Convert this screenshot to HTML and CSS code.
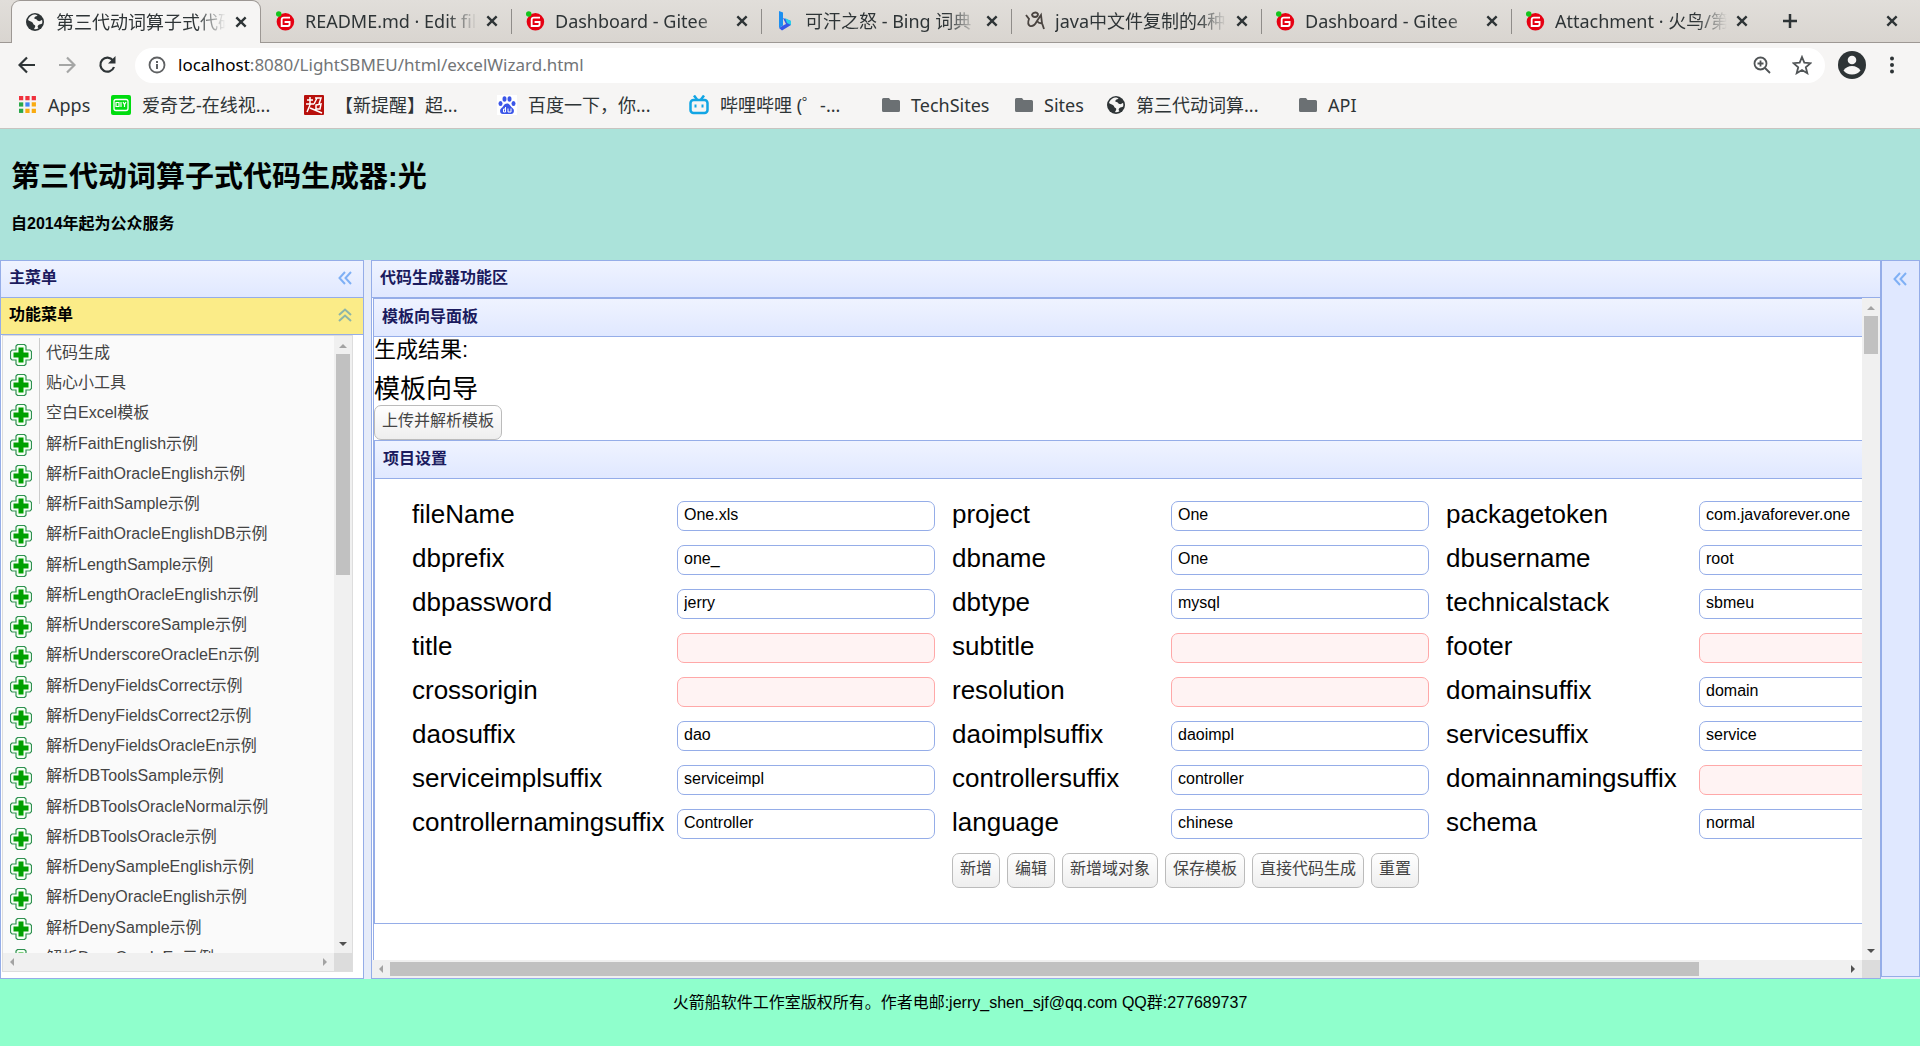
FILE: index.html
```html
<!DOCTYPE html>
<html lang="zh-CN">
<head>
<meta charset="utf-8">
<title>第三代动词算子式代码生成器:光</title>
<link rel="stylesheet" href="styles.css">
</head>
<body>
<svg class="sprite" aria-hidden="true">
  <symbol id="globe" viewBox="0 0 18 18"><circle cx="9" cy="9" r="9" fill="#2e3436"/><path d="M9.500 1.500C6 1.500 3 3.500 2 7c1.500 1.500 3 1 4.500 2.500 1 1 .5 2 2 2.500 1.200.4 1 2-.5 4 1 .5 3 .3 4.500-.7-.8-1.300-1.500-2 0-3.300 1-.9 2.500-.6 3.600-1.500.4-1.500.3-2.500-.1-3.500-1.500.5-2 1.500-3.500 1-1.800-.6-1.500-2-3-2-1.300 0-1.500-1-.7-2 .8-.8 2.200-.5 2.700-1.500z" fill="#f6f5f4"/></symbol>
  <symbol id="gitee" viewBox="0 0 22 24"><circle cx="11.500" cy="13" r="10.500" fill="#e60012"/><circle cx="3.500" cy="3.500" r="3.300" fill="#14c41c"/><path d="M17 8H9.500Q7 8 7 10.500V18h7.500q2 0 2-2v-2.800h-6" fill="none" stroke="#fff" stroke-width="2.200"/></symbol>
  <symbol id="cross" viewBox="0 0 12 12"><path d="M2 2l8 8M10 2l-8 8" stroke="#2e3436" stroke-width="2"/></symbol>
  <symbol id="folder" viewBox="0 0 18 16"><path d="M1.500 1H7l1.500 2h8q1.500 0 1.500 1.500v9q0 1.500-1.500 1.500h-15Q0 15 0 13.500v-11Q0 1 1.500 1z" fill="#6b7073"/></symbol>
  <symbol id="plus-cross" viewBox="0 0 22 22"><path d="M7.500.5h7l1.500 1.500v4h4l1.500 1.500v7L20 16h-4v4l-1.500 1.500h-7L6 20v-4H2L.5 14.500v-7L2 6h4V2z" fill="#f4fff4" stroke="#2f9150" stroke-width="1.200"/><path d="M8.500 3.500h5v5h5v5h-5v5h-5v-5h-5v-5h5z" fill="#00a000"/></symbol>
  <symbol id="fold-left" viewBox="0 0 14 14"><path d="M7 1L1.500 7 7 13M13 1L7.500 7 13 13" fill="none" stroke="#7fb0f5" stroke-width="2"/></symbol>
  <symbol id="fold-up" viewBox="0 0 14 14"><path d="M1 7l6-5.500L13 7M1 13l6-5.500L13 13" fill="none" stroke="#8db5a8" stroke-width="2"/></symbol>
</svg>

<header class="browser">
  <nav class="tabs" aria-label="标签页">
    <div class="tab tab-active"><svg class="favicon favicon-globe"><use href="#globe"/></svg><span class="tab-title">第三代动词算子式代码</span><button class="close" aria-label="关闭"><svg><use href="#cross"/></svg></button></div>
    <div class="tab"><svg class="favicon"><use href="#gitee"/></svg><span class="tab-title">README.md · Edit file</span><button class="close" aria-label="关闭"><svg><use href="#cross"/></svg></button></div>
    <div class="tab"><svg class="favicon"><use href="#gitee"/></svg><span class="tab-title">Dashboard - Gitee</span><button class="close" aria-label="关闭"><svg><use href="#cross"/></svg></button></div>
    <div class="tab"><svg class="favicon" viewBox="0 0 20 20"><path d="M4 0l4 1.500v13L4 17z" fill="#1d8ff0"/><path d="M8 7l8 3v4L7 19.500 4 17l5-3 2-1z" fill="#3457e8"/><path d="M10 7l6 3v4l-4-2z" fill="#2bd0e8"/></svg><span class="tab-title">可汗之怒 - Bing 词典</span><button class="close" aria-label="关闭"><svg><use href="#cross"/></svg></button></div>
    <div class="tab"><svg class="favicon" viewBox="0 0 20 20"><path d="M1 4l3 4q-2 5 1 7 4 1 7-5l4-6 1 8 2 6M7 3q4-3 6 0 0 3-3 3T7 3M12 10q2 3 6 2" fill="none" stroke="#4a4440" stroke-width="1.800"/></svg><span class="tab-title">java中文件复制的4种</span><button class="close" aria-label="关闭"><svg><use href="#cross"/></svg></button></div>
    <div class="tab"><svg class="favicon"><use href="#gitee"/></svg><span class="tab-title">Dashboard - Gitee</span><button class="close" aria-label="关闭"><svg><use href="#cross"/></svg></button></div>
    <div class="tab"><svg class="favicon"><use href="#gitee"/></svg><span class="tab-title">Attachment · 火鸟/第</span><button class="close" aria-label="关闭"><svg><use href="#cross"/></svg></button></div>
    <button class="new-tab" aria-label="新标签页"><svg viewBox="0 0 16 16"><path d="M8 1v14M1 8h14" stroke="#2e3436" stroke-width="2.500"/></svg></button>
    <button class="close window-close" aria-label="关闭窗口"><svg><use href="#cross"/></svg></button>
  </nav>
  <div class="toolbar">
    <button class="tool" aria-label="后退"><svg viewBox="0 0 18 18"><path d="M17 9H2M9 1.500L1.500 9 9 16.500" fill="none" stroke="#2e3436" stroke-width="2.200"/></svg></button>
    <button class="tool" aria-label="前进"><svg viewBox="0 0 18 18"><path d="M1 9h15M9 1.500L16.500 9 9 16.500" fill="none" stroke="#a5a6a5" stroke-width="2.200"/></svg></button>
    <button class="tool" aria-label="刷新"><svg viewBox="0 0 18 18"><path d="M15 4.500A7 7 0 1 0 16 11" fill="none" stroke="#2e3436" stroke-width="2.200"/><path d="M17.500 0v7.500H10z" fill="#2e3436"/></svg></button>
    <div class="omnibox">
      <svg class="info" viewBox="0 0 18 18"><circle cx="9" cy="9" r="7.500" fill="none" stroke="#5f6163" stroke-width="1.800"/><path d="M9 8v5M9 5v2" stroke="#5f6163" stroke-width="2"/></svg>
      <a class="url" href="#"><span class="host">localhost</span>:8080/LightSBMEU/html/excelWizard.html</a>
      <svg class="zoom-icon" viewBox="0 0 18 18"><circle cx="7.500" cy="7.500" r="6" fill="none" stroke="#505456" stroke-width="1.800"/><path d="M12 12l5 5M4.500 7.500h6M7.500 4.500v6" stroke="#505456" stroke-width="1.800"/></svg>
      <svg class="star" viewBox="0 0 20 20"><path d="M10 2l2.300 5.700 6.200.5-4.700 4 1.500 6L10 15l-5.300 3.200 1.500-6-4.700-4 6.200-.5z" fill="none" stroke="#505456" stroke-width="1.800"/></svg>
    </div>
    <svg class="avatar" viewBox="0 0 28 28"><circle cx="14" cy="14" r="14" fill="#2e3436"/><circle cx="14" cy="9" r="4.300" fill="#f6f5f4"/><path d="M5.500 19.500q3-4.500 8.500-4.500t8.500 4.500q-3 4-8.500 4t-8.500-4z" fill="#f6f5f4"/></svg>
    <svg class="dots" viewBox="0 0 4 18"><g fill="#2e3436"><circle cx="2" cy="2.500" r="2"/><circle cx="2" cy="9" r="2"/><circle cx="2" cy="15.500" r="2"/></g></svg>
  </div>
  <nav class="bookmarks" aria-label="书签">
    <a class="bm bm-apps" href="#"><svg class="apps" viewBox="0 0 17 17"><path d="M0 0h4v4H0zM6 0h4v4H6zM12 0h4v4h-4z" fill="#f0303c"/><path d="M0 6h4v4H0z" fill="#2aa84a"/><path d="M6 6h4v4H6z" fill="#4285f4"/><path d="M12 6h4v4h-4zM6 12h4v4H6zM12 12h4v4h-4z" fill="#f9ab10"/><path d="M0 12h4v4H0z" fill="#2aa84a"/></svg>Apps</a>
    <a class="bm bm-iqiyi" href="#"><svg class="bm-icon" viewBox="0 0 20 20"><rect width="20" height="20" rx="2" fill="#00dc10"/><rect x="3" y="4.500" width="14" height="11" rx="2" fill="none" stroke="#fff" stroke-width="1.300"/><path d="M5 7.500h3v4H5zM10 7v5M12 7l1.500 2.500L15 7M13.500 9.500V12" fill="none" stroke="#fff" stroke-width="1.200"/></svg>爱奇艺-在线视...</a>
    <a class="bm bm-chao" href="#"><svg class="bm-icon" viewBox="0 0 20 20"><rect width="20" height="20" rx="1" fill="#b8100c"/><path d="M3 5h6M6 2v8M2 9h8M6 10l-3 7M6 13l12 5M11 3h6l-2 6M13 3l-3 6M12 10l5-1-1 5h-4z" fill="none" stroke="#fff" stroke-width="1.500"/></svg>【新提醒】超...</a>
    <a class="bm bm-baidu" href="#"><svg class="bm-icon" viewBox="0 0 20 20"><rect width="20" height="20" fill="#fff"/><g fill="#3b56e8"><ellipse cx="3.500" cy="8.500" rx="2" ry="2.500"/><ellipse cx="7.500" cy="4" rx="2" ry="2.800"/><ellipse cx="12.500" cy="4" rx="2" ry="2.800"/><ellipse cx="16.500" cy="8.500" rx="2" ry="2.500"/><path d="M10 8.500c3 0 3.500 3 5.500 4.500 2.500 2 1.500 6-1.500 6H6c-3 0-4-4-1.500-6C6.500 11.500 7 8.500 10 8.500z"/></g><path d="M8.500 12v5H6.500v-3h2M11 13.500V17h3v-3.500" fill="none" stroke="#fff"/></svg>百度一下，你...</a>
    <a class="bm bm-bili" href="#"><svg class="bm-icon" viewBox="0 0 20 20"><rect x="1.500" y="5" width="17" height="13" rx="3" fill="none" stroke="#12a5e4" stroke-width="2.500"/><path d="M5 .5L8 4.500M15 .5l-3 4" stroke="#12a5e4" stroke-width="2.500"/><path d="M6.500 9.500v3M13.500 9.500v3" stroke="#12a5e4" stroke-width="2"/></svg>哔哩哔哩 (゜-...</a>
    <a class="bm bm-folder" href="#"><svg class="folder"><use href="#folder"/></svg>TechSites</a>
    <a class="bm bm-folder bm-sites" href="#"><svg class="folder"><use href="#folder"/></svg>Sites</a>
    <a class="bm bm-gen" href="#"><svg class="folder"><use href="#globe"/></svg>第三代动词算...</a>
    <a class="bm bm-folder" href="#"><svg class="folder"><use href="#folder"/></svg>API</a>
  </nav>
</header>

<div class="banner">
  <h1>第三代动词算子式代码生成器:光</h1>
  <h2>自2014年起为公众服务</h2>
</div>

<div class="workspace">
  <aside class="west">
    <h3 class="panel-title">主菜单<svg class="fold"><use href="#fold-left"/></svg></h3>
    <h3 class="panel-title panel-selected">功能菜单<svg class="fold"><use href="#fold-up"/></svg></h3>
    <div class="menu-box">
      <ul class="menu">
        <li><svg><use href="#plus-cross"/></svg><a href="#">代码生成</a></li>
        <li><svg><use href="#plus-cross"/></svg><a href="#">贴心小工具</a></li>
        <li><svg><use href="#plus-cross"/></svg><a href="#">空白Excel模板</a></li>
        <li><svg><use href="#plus-cross"/></svg><a href="#">解析FaithEnglish示例</a></li>
        <li><svg><use href="#plus-cross"/></svg><a href="#">解析FaithOracleEnglish示例</a></li>
        <li><svg><use href="#plus-cross"/></svg><a href="#">解析FaithSample示例</a></li>
        <li><svg><use href="#plus-cross"/></svg><a href="#">解析FaithOracleEnglishDB示例</a></li>
        <li><svg><use href="#plus-cross"/></svg><a href="#">解析LengthSample示例</a></li>
        <li><svg><use href="#plus-cross"/></svg><a href="#">解析LengthOracleEnglish示例</a></li>
        <li><svg><use href="#plus-cross"/></svg><a href="#">解析UnderscoreSample示例</a></li>
        <li><svg><use href="#plus-cross"/></svg><a href="#">解析UnderscoreOracleEn示例</a></li>
        <li><svg><use href="#plus-cross"/></svg><a href="#">解析DenyFieldsCorrect示例</a></li>
        <li><svg><use href="#plus-cross"/></svg><a href="#">解析DenyFieldsCorrect2示例</a></li>
        <li><svg><use href="#plus-cross"/></svg><a href="#">解析DenyFieldsOracleEn示例</a></li>
        <li><svg><use href="#plus-cross"/></svg><a href="#">解析DBToolsSample示例</a></li>
        <li><svg><use href="#plus-cross"/></svg><a href="#">解析DBToolsOracleNormal示例</a></li>
        <li><svg><use href="#plus-cross"/></svg><a href="#">解析DBToolsOracle示例</a></li>
        <li><svg><use href="#plus-cross"/></svg><a href="#">解析DenySampleEnglish示例</a></li>
        <li><svg><use href="#plus-cross"/></svg><a href="#">解析DenyOracleEnglish示例</a></li>
        <li><svg><use href="#plus-cross"/></svg><a href="#">解析DenySample示例</a></li>
        <li><svg><use href="#plus-cross"/></svg><a href="#">解析DenyOracleEn示例</a></li>
      </ul>
      <div class="vbar"><i class="arrow up off"></i><div class="vtrack"><div class="thumb menu-thumb"></div></div><i class="arrow down"></i></div>
      <div class="hbar"><i class="arrow left off"></i><div class="htrack"></div><i class="arrow right off"></i></div>
      <div class="corner"></div>
    </div>
  </aside>

  <main class="center">
    <h3 class="panel-title">代码生成器功能区</h3>
    <div class="scroll-area">
      <div class="view">
        <section class="wizard">
          <h3 class="panel-title">模板向导面板</h3>
          <p class="result">生成结果:</p>
          <h2 class="wizard-title">模板向导</h2>
          <button class="btn">上传并解析模板</button>
          <section class="project">
            <h3 class="panel-title">项目设置</h3>
            <form class="form">
              <label for="f1">fileName</label><input id="f1" value="One.xls">
              <label for="f2">project</label><input id="f2" value="One">
              <label for="f3">packagetoken</label><input id="f3" value="com.javaforever.one">
              <label for="f4">dbprefix</label><input id="f4" value="one_">
              <label for="f5">dbname</label><input id="f5" value="One">
              <label for="f6">dbusername</label><input id="f6" value="root">
              <label for="f7">dbpassword</label><input id="f7" value="jerry">
              <label for="f8">dbtype</label><input id="f8" value="mysql">
              <label for="f9">technicalstack</label><input id="f9" value="sbmeu">
              <label for="f10">title</label><input id="f10" class="invalid">
              <label for="f11">subtitle</label><input id="f11" class="invalid">
              <label for="f12">footer</label><input id="f12" class="invalid">
              <label for="f13">crossorigin</label><input id="f13" class="invalid">
              <label for="f14">resolution</label><input id="f14" class="invalid">
              <label for="f15">domainsuffix</label><input id="f15" value="domain">
              <label for="f16">daosuffix</label><input id="f16" value="dao">
              <label for="f17">daoimplsuffix</label><input id="f17" value="daoimpl">
              <label for="f18">servicesuffix</label><input id="f18" value="service">
              <label for="f19">serviceimplsuffix</label><input id="f19" value="serviceimpl">
              <label for="f20">controllersuffix</label><input id="f20" value="controller">
              <label for="f21">domainnamingsuffix</label><input id="f21" class="invalid">
              <label for="f22">controllernamingsuffix</label><input id="f22" value="Controller">
              <label for="f23">language</label><input id="f23" value="chinese">
              <label for="f24">schema</label><input id="f24" value="normal">
              <div class="actions">
                <button type="button" class="btn">新增</button>
                <button type="button" class="btn">编辑</button>
                <button type="button" class="btn">新增域对象</button>
                <button type="button" class="btn">保存模板</button>
                <button type="button" class="btn">直接代码生成</button>
                <button type="button" class="btn">重置</button>
              </div>
            </form>
          </section>
        </section>
      </div>
      <div class="vbar"><i class="arrow up off"></i><div class="vtrack"><div class="thumb page-thumb"></div></div><i class="arrow down"></i></div>
      <div class="hbar"><i class="arrow left off"></i><div class="htrack"><div class="thumb wide-thumb"></div></div><i class="arrow right"></i></div>
      <div class="corner"></div>
    </div>
  </main>

  <aside class="east"><svg class="fold"><use href="#fold-left"/></svg></aside>
</div>

<footer class="footer">火箭船软件工作室版权所有。作者电邮:jerry_shen_sjf@qq.com QQ群:277689737</footer>
</body>
</html>
```

FILE: styles.css
```css
* { box-sizing: border-box; }

body {
  margin: 0;
  height: 100vh;
  display: flex;
  flex-direction: column;
  overflow: hidden;
  background: #fff;
  color: #000;
  font: 16px/20px "Liberation Sans", "Noto Sans CJK SC", sans-serif;
}

h1, h2, h3, p, ul { margin: 0; padding: 0; }
button { padding: 0; border: 0; background: none; font: inherit; }
a { color: inherit; text-decoration: none; }
svg { display: block; flex: none; }
.sprite { position: absolute; width: 0; height: 0; }

/* Browser window */
.browser {
  flex: none;
  background: #f6f5f4;
  border-bottom: 1px solid #c8c4c0;
  color: #2e3436;
  font: 18px/24px "Noto Sans", "Noto Sans CJK SC", sans-serif;
}
.tabs {
  display: flex;
  align-items: center;
  height: 43px;
  padding-left: 11px;
  background: linear-gradient(#e1deda, #d9d5d0);
  border-bottom: 1px solid #9d9894;
}
.tab {
  position: relative;
  display: flex;
  align-items: center;
  flex: 0 1 250px;
  min-width: 0;
  height: 42px;
  padding: 0 12px 0 14px;
}
.tab + .tab:not(:nth-child(2))::before {
  content: "";
  position: absolute;
  left: 0;
  top: 9px;
  width: 1px;
  height: 25px;
  background: #8f8c89;
}
.tab-active {
  height: 43px;
  margin-bottom: -1px;
  background: #f6f5f4;
  border: 1px solid #9d9894;
  border-bottom: 0;
  border-radius: 9px 9px 0 0;
}
.favicon { width: 20px; height: 20px; }
.favicon-globe { height: 18px; padding-right: 2px; }
.tab-title {
  flex: 1;
  min-width: 0;
  margin: 0 8px 0 10px;
  overflow: hidden;
  white-space: nowrap;
  -webkit-mask: linear-gradient(90deg, #000 calc(100% - 30px), transparent);
  mask: linear-gradient(90deg, #000 calc(100% - 30px), transparent);
}
.close svg { width: 14px; height: 14px; }
.new-tab { margin-left: 21px; }
.new-tab svg { width: 16px; height: 16px; }
.window-close { margin: 0 21px 0 auto; }

.toolbar {
  display: flex;
  align-items: center;
  height: 46px;
  margin-top: -1px;
  padding: 0 26px 0 18px;
}
.tool { margin-right: 22px; }
.tool svg { width: 18px; height: 18px; }
.omnibox {
  display: flex;
  align-items: center;
  flex: 1;
  height: 35px;
  margin-left: -3px;
  padding: 0 13px;
  border-radius: 18px;
  background: #fff;
}
.info { width: 18px; height: 18px; }
.url { flex: 1; margin-left: 12px; color: #727577; font-size: 17px; }
.host { color: #000; }
.zoom-icon { width: 18px; height: 18px; }
.star { width: 20px; height: 20px; margin-left: 21px; }
.avatar { width: 28px; height: 28px; margin-left: 13px; }
.dots { width: 4px; height: 18px; margin-left: 24px; }

.bookmarks {
  display: flex;
  align-items: center;
  height: 40px;
  padding: 0 0 6px 19px;
}
.bm { display: flex; align-items: center; white-space: nowrap; gap: 11px; }
.bm-icon { width: 20px; height: 20px; }
.apps { width: 18px; height: 18px; }
.folder { width: 18px; height: 18px; }
.bm-apps { width: 92px; }
.bm-iqiyi { width: 193px; }
.bm-chao, .bm-bili { width: 193px; }
.bm-baidu { width: 192px; }
.bm-folder { width: 133px; }
.bm-sites { width: 92px; }
.bm-gen { width: 192px; }

/* Banner */
.banner {
  flex: none;
  height: 131px;
  padding: 28px 11px 0;
  background: #abe3da;
}
.banner h1 { font-size: 29px; line-height: 40px; }
.banner h2 { margin-top: 17px; font-size: 16px; line-height: 20px; }

/* Layout regions */
.workspace {
  display: flex;
  flex: 1;
  min-height: 0;
  background: #e6ecf9;
}
.panel-title {
  display: flex;
  align-items: center;
  justify-content: space-between;
  flex: none;
  height: 37px;
  padding: 0 11px 2px 8px;
  border-bottom: 1px solid #95ade8;
  background: linear-gradient(#eff3ff, #e0e8ff);
  color: #1b1b5e;
  font-size: 16px;
}
.panel-selected { background: #fbec88; color: #000; }
.fold { width: 14px; height: 14px; }

.west {
  display: flex;
  flex-direction: column;
  flex: none;
  width: 364px;
  border: 1px solid #95ade8;
  background: #fff;
}
.menu-box, .scroll-area {
  display: grid;
  grid-template-columns: minmax(0, 1fr) 18px;
  grid-template-rows: minmax(0, 1fr) 18px;
  flex: 1;
  min-height: 0;
}
.menu-box {
  margin: 0 10px 6px 1px;
  border: 1px solid #ddd;
  background: #fafafa;
}
.menu {
  overflow: hidden;
  padding-top: 2px;
  list-style: none;
  background: linear-gradient(#ccc, #ccc) 36px 2px / 1px 166px no-repeat;
}
.menu li {
  display: flex;
  align-items: center;
  height: 30px;
  padding-left: 7px;
  gap: 14px;
  color: #444;
  white-space: nowrap;
}
.menu li:nth-child(4n) { height: 31px; }
.menu svg { width: 22px; height: 22px; margin-top: 3px; }

/* Scroll bars */
.vbar, .hbar { display: flex; align-items: center; background: #f0f0f0; }
.vbar { flex-direction: column; }
.vtrack { flex: 1; width: 14px; }
.htrack { flex: 1; height: 14px; }
.corner { background: #dcdcdc; }
.thumb { width: 100%; height: 100%; background: #c1c1c1; }
.menu-thumb { height: 38%; }
.page-thumb { height: 6%; }
.wide-thumb { width: 90%; }
.arrow { flex: none; width: 18px; height: 18px; background: #505050; }
.arrow.off { background: #a3a3a3; }
.up { clip-path: polygon(5px 12px, 9px 8px, 13px 12px); }
.down { clip-path: polygon(5px 7px, 13px 7px, 9px 11px); }
.left { clip-path: polygon(11px 5px, 11px 13px, 7px 9px); }
.right { clip-path: polygon(7px 5px, 7px 13px, 11px 9px); }

.center {
  display: flex;
  flex-direction: column;
  flex: 1;
  min-width: 0;
  margin-left: 7px;
  border: 1px solid #95ade8;
  background: #fff;
}
.view { overflow: hidden; padding-left: 1px; }
.wizard {
  height: 100%;
  border: solid #95ade8;
  border-width: 1px 0 0 1px;
}
.wizard > .panel-title, .project > .panel-title { height: 38px; }
.result { font-size: 22px; line-height: 26px; }
.wizard-title { margin: 10px 0 0; font-size: 26px; font-weight: 400; line-height: 32px; }
.btn {
  height: 35px;
  padding: 0 7px 3px;
  border: 1px solid #bbb;
  border-radius: 7px;
  background: linear-gradient(#fff, #eee);
  color: #444;
  white-space: nowrap;
}
.wizard > .btn { display: block; }
.project { border: solid #95ade8; border-width: 1px 0 1px 1px; }
.form {
  display: grid;
  grid-template-columns: 248px 258px 202px 258px 236px 258px;
  gap: 14px 17px;
  padding: 22px 37px 35px;
}
.form label { font-size: 26px; line-height: 26px; }
.form input {
  width: 100%;
  height: 30px;
  padding: 0 6px 3px;
  border: 1px solid #95ade8;
  border-radius: 7px;
  background: #fff;
  color: #000;
  font: inherit;
}
.form .invalid { border-color: #ffa8a8; background: #fff3f3; }
.actions { display: flex; grid-column: 3 / -1; gap: 7px; }

.east {
  flex: none;
  width: 39px;
  margin-bottom: 2px;
  padding: 11px 11px 0;
  border: 1px solid #95ade8;
  background: #e0e8ff;
}

.footer {
  flex: none;
  height: 67px;
  padding-top: 14px;
  background: #8fffcc;
  text-align: center;
}
```
